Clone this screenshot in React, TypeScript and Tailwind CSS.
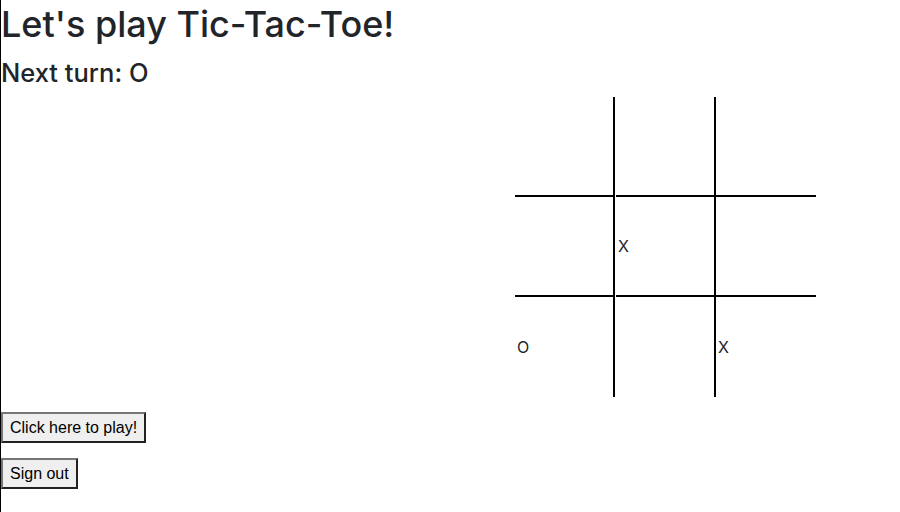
import React from 'react'

const board: string[] = ['', '', '', '', 'X', '', 'O', '', 'X']

function Cell({ value, index }: { value: string; index: number }) {
  const col = index % 3
  const row = Math.floor(index / 3)
  const right = col < 2 ? 'border-r-2' : ''
  const bottom = row < 2 ? 'border-b-2' : ''
  return (
    <div className={`w-[100px] h-[100px] flex items-center pl-[2px] border-black ${right} ${bottom}`}>
      <span className="text-[16px] leading-none text-[#212529]">{value}</span>
    </div>
  )
}

export default function App() {
  return (
    <div className="min-h-screen border-l border-black bg-white text-[#212529] font-['Inter',sans-serif]">
      <h1 className="pt-[3px] text-[36px] leading-[1.2] font-medium mb-[12px]">Let's play Tic-Tac-Toe!</h1>
      <h4 className="text-[25.5px] leading-[1.2] font-medium">Next turn: O</h4>
      <div className="ml-[514px] mt-[8px] grid grid-cols-[101px_100px_99px] w-[300px]">
        {board.map((v, i) => (
          <Cell key={i} value={v} index={i} />
        ))}
      </div>
      <div className="flex flex-col items-start gap-[15px] mt-[15px] font-['Liberation_Sans',Arial,sans-serif]">
        <button className="text-[16px] leading-[19px] text-black bg-[#efefef] border-2 [border-style:outset] border-[#767676] px-[7px] py-1">
          Click here to play!
        </button>
        <button className="text-[16px] leading-[19px] text-black bg-[#efefef] border-2 [border-style:outset] border-[#767676] px-[7px] py-1">
          Sign out
        </button>
      </div>
    </div>
  )
}
